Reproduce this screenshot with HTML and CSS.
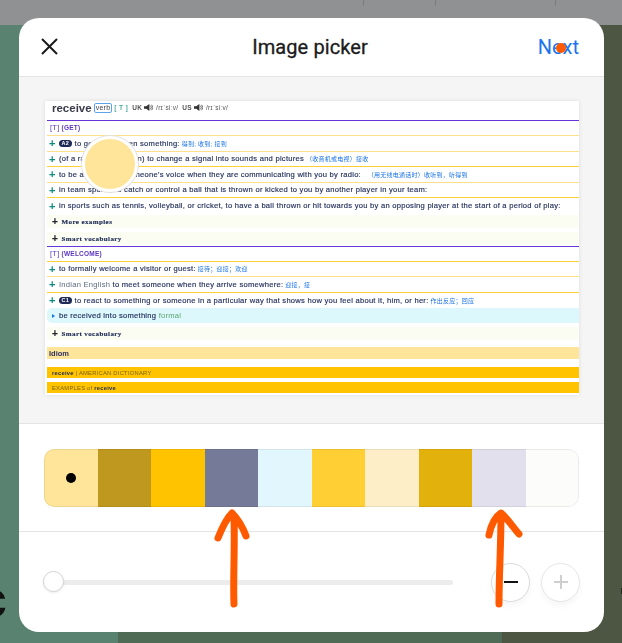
FILE: index.html
```html
<!DOCTYPE html>
<html lang="en">

<head>
  <meta charset="UTF-8" />
  <meta name="viewport" content="width=device-width, initial-scale=1.0" />
  <title>Image picker</title>
  <link rel="stylesheet" href="styles.css">
</head>

<body>
  <div class="backdrop">
    <div class="topbar">
      <span class="tick tick-a"></span>
      <span class="tick tick-b"></span>
      <span class="tick tick-c"></span>
    </div>
    <div class="scene">
      <div class="scene-left"><span class="scene-letter">c</span></div>
      <div class="scene-right"><span class="scene-mark"></span></div>
    </div>
    <div class="scene-foot">
      <div class="foot-a"></div>
      <div class="foot-b"></div>
      <div class="foot-c"></div>
    </div>
  </div>

  <div class="modal">
    <div class="modal-header">
      <svg class="close-icon" viewBox="0 0 17 17" width="17" height="17">
        <path d="M1 1 L16 16 M16 1 L1 16" />
      </svg>
      <div class="modal-title">Image picker</div>
      <div class="next-link">Next</div>
    </div>

    <div class="preview-area">
      <div class="shot">
        <div class="shot-inner">
          <div class="word-row">
            <span class="word">receive</span>
            <span class="pos">verb</span>
            <span class="gram">[ T ]</span>
            <span class="region">UK</span>
            <svg class="speaker" viewBox="0 0 10 10" width="9" height="9"><path d="M0 3.5h2.5L6 1v8L2.5 6.500H0z" /><path class="wave" d="M7.200 3a3 3 0 0 1 0 4M8.500 2a4.500 4.500 0 0 1 0 6" /></svg>
            <span class="ipa">/rɪˈsiːv/</span>
            <span class="region">US</span>
            <svg class="speaker" viewBox="0 0 10 10" width="9" height="9"><path d="M0 3.5h2.5L6 1v8L2.5 6.500H0z" /><path class="wave" d="M7.200 3a3 3 0 0 1 0 4M8.500 2a4.500 4.500 0 0 1 0 6" /></svg>
            <span class="ipa">/rɪˈsiːv/</span>
          </div>

          <div class="sense"><b>[T]</b> <span>(GET)</span></div>
          <div class="row line-pale"><i>+</i><em>A2</em>to get or be given something: <u>得到; 收到; 接到</u></div>
          <div class="row line-gold"><i>+</i>(of a radio or television) to change a signal into sounds and pictures <u>（收音机或电视）接收</u></div>
          <div class="row line-pale"><i>+</i>to be able to hear someone's voice when they are communicating with you by radio: &nbsp;<u>（用无线电通话时）收听到，听得到</u></div>
          <div class="row line-gold"><i>+</i>in team sports, to catch or control a ball that is thrown or kicked to you by another player in your team:</div>
          <div class="row"><i>+</i>in sports such as tennis, volleyball, or cricket, to have a ball thrown or hit towards you by an opposing player at the start of a period of play:</div>
          <div class="more more-first"><i>+</i>More examples</div>
          <div class="more"><i>+</i>Smart vocabulary</div>

          <div class="sense sense-second"><b>[T]</b> <span>(WELCOME)</span></div>
          <div class="row line-pale"><i>+</i>to formally welcome a visitor or guest: <u>接待；迎接；欢迎</u></div>
          <div class="row line-gold"><i>+</i><span class="note">Indian English</span>&nbsp;to meet someone when they arrive somewhere: <u>迎接，接</u></div>
          <div class="row"><i>+</i><em>C1</em>to react to something or someone in a particular way that shows how you feel about it, him, or her: <u>作出反应；回应</u></div>
          <div class="phrase"><span class="caret"></span>be received into something <span class="formal">formal</span></div>
          <div class="more more-last"><i>+</i>Smart vocabulary</div>
          <div class="idiom">Idiom</div>
          <div class="band"><strong>receive</strong>&nbsp;| AMERICAN DICTIONARY</div>
          <div class="band band-second">EXAMPLES of&nbsp;<strong>receive</strong></div>
        </div>
        <div class="loupe"></div>
      </div>
    </div>

    <div class="palette-area">
      <div class="palette">
        <div class="swatch c1"><span class="picked"></span></div>
        <div class="swatch c2"></div>
        <div class="swatch c3"></div>
        <div class="swatch c4"></div>
        <div class="swatch c5"></div>
        <div class="swatch c6"></div>
        <div class="swatch c7"></div>
        <div class="swatch c8"></div>
        <div class="swatch c9"></div>
        <div class="swatch c10"></div>
      </div>
    </div>

    <div class="zoom-area">
      <div class="slider"><span class="slider-thumb"></span></div>
      <div class="round-btn">
        <svg viewBox="0 0 16 16" width="16" height="16"><path class="minus" d="M1 8H15" /></svg>
      </div>
      <div class="round-btn round-btn-off">
        <svg viewBox="0 0 16 16" width="16" height="16"><path class="plus" d="M1 8H15M8 1V15" /></svg>
      </div>
    </div>
  </div>

  <!-- hand drawn marks on top of the screenshot -->
  <div class="next-dot"></div>
  <svg class="scribble" viewBox="0 0 622 643" width="622" height="643">
    <path d="M234 604 C233 580 235 545 234 518 M218 538 C222 528 227 518 232 513 C238 519 243 528 246 536" />
    <path d="M499 604 C499 575 501 545 501 514 M489 535 C491 525 495 517 501 513 C507 518 513 527 519 534" />
  </svg>
</body>

</html>
```

FILE: styles.css
```css
body {
  margin: 0;
  padding: 0;
  width: 622px;
  height: 643px;
  overflow: hidden;
  font-family: 'Roboto', sans-serif;
}

/* page behind the dialog */
.backdrop {
  display: flex;
  flex-direction: column;
  height: 643px;
}

.topbar {
  display: flex;
  height: 25px;
  background-color: #909193;
  position: relative;
}

.tick {
  position: absolute;
  top: 0;
  width: 1px;
  height: 6px;
  background-color: #7d7e80;
}

.tick-a { left: 363px; }
.tick-b { left: 435px; }
.tick-c { left: 555px; }

.scene {
  flex: 1;
  display: flex;
  min-height: 0;
}

.scene-left {
  width: 50%;
  background-color: #5a8270;
  overflow: hidden;
}

.scene-right {
  width: 50%;
  background-color: #4d5643;
}

.scene-letter {
  display: block;
  margin: 548px 0 0 -22px;
  font-family: 'Liberation Sans', sans-serif;
  font-weight: 700;
  font-size: 52px;
  line-height: 52px;
  color: #111;
}

.scene-mark {
  display: block;
  width: 1px;
  height: 6px;
  margin: 563px 0 0 auto;
  background-color: #23271f;
}

.scene-foot {
  display: flex;
  height: 11px;
}

.foot-a { width: 118px; background-color: #5a8270; }
.foot-b { width: 384px; background-color: #506b55; }
.foot-c { flex: 1; background-color: #4d5643; }

/* dialog */
.modal {
  position: absolute;
  left: 19px;
  top: 18px;
  width: 585px;
  height: 614px;
  display: flex;
  flex-direction: column;
  background-color: #fff;
  border-radius: 20px;
  overflow: hidden;
}

.modal-header {
  height: 59px;
  flex: none;
  box-sizing: border-box;
  display: grid;
  grid-template-columns: 1fr auto 1fr;
  align-items: center;
  padding: 0 25px 1px 22px;
  border-bottom: 1px solid #e4e4e4;
}

.close-icon path {
  fill: none;
  stroke: #1a1a1a;
  stroke-width: 2;
}

.modal-title {
  font-size: 20px;
  font-weight: 400;
  letter-spacing: 0.1px;
  color: #1c1c1c;
  -webkit-text-stroke: 0.3px #1c1c1c;
}

.next-link {
  justify-self: end;
  font-size: 20px;
  color: #1a73f0;
}

.preview-area {
  height: 347px;
  flex: none;
  padding: 24px 25px 0 26px;
  box-sizing: border-box;
  background-color: #f5f5f5;
  border-bottom: 1px solid #e4e4e4;
}

.shot {
  position: relative;
  width: 534px;
  height: 294px;
  background-color: #fff;
  box-shadow: 0 0 4px rgba(0, 0, 0, 0.1);
}

.shot-inner {
  height: 100%;
  padding-left: 2px;
  box-sizing: border-box;
  font-family: 'Liberation Sans', 'Noto Sans CJK SC', sans-serif;
  font-size: 7.6px;
  font-weight: 400;
  letter-spacing: 0.25px;
  color: #1d2a57;
  -webkit-text-stroke: 0.15px #1d2a57;
  filter: blur(0.25px);
}

.word-row {
  display: flex;
  align-items: center;
  gap: 2px;
  height: 19.500px;
  box-sizing: border-box;
  padding: 0 0 5px 5px;
  border-bottom: 1px solid #6a35d8;
  color: #444;
  font-size: 6.5px;
  -webkit-text-stroke: 0;
}

.word {
  font-size: 11.5px;
  font-weight: 700;
  letter-spacing: 0;
  color: #3a3a4a;
}

.pos {
  border: 1px solid #5aa5e8;
  border-radius: 2px;
  padding: 0 1px;
  font-size: 7px;
  line-height: 8px;
}

.gram {
  color: #14907f;
  font-size: 7.500px;
  margin-right: 2px;
}

.region {
  font-weight: 700;
  color: #555;
}

.ipa {
  margin: 0 2px 0 1px;
  color: #555;
}

.speaker path {
  fill: #333;
}

.speaker .wave {
  fill: none;
  stroke: #333;
  stroke-width: 0.8;
}

.sense {
  height: 15.500px;
  display: flex;
  align-items: center;
  gap: 2px;
  padding-left: 3px;
  box-sizing: border-box;
  color: #5a35c0;
  -webkit-text-stroke: 0;
  font-size: 6.5px;
  border-bottom: 1px solid #ffe08a;
}

.sense b {
  font-size: 7.500px;
  font-weight: 400;
}

.sense span {
  font-weight: 700;
}

.sense-second {
  margin-top: 1px;
  border-top: 1px solid #6a35d8;
  border-bottom-color: #ffcf33;
}

.row {
  height: 15.500px;
  display: flex;
  align-items: center;
  padding-left: 2px;
  box-sizing: border-box;
  white-space: nowrap;
}

.row i {
  width: 10px;
  flex: none;
  font-style: normal;
  font-weight: 700;
  font-size: 11px;
  color: #0f8a7e;
  -webkit-text-stroke: 0;
}

.row em {
  font-style: normal;
  font-weight: 700;
  font-size: 5.500px;
  line-height: 7px;
  color: #fff;
  -webkit-text-stroke: 0;
  background-color: #1d2a57;
  border-radius: 4px;
  padding: 0 2.5px;
  margin-right: 3px;
}

.row u {
  text-decoration: none;
  color: #1a73e8;
  -webkit-text-stroke: 0;
  margin-left: 2px;
  font-size: 6px;
}

.line-pale { border-bottom: 1px solid #ffe08a; }
.line-gold { border-bottom: 1px solid #ffcf33; }

.note {
  color: #5b6a80;
  -webkit-text-stroke: 0;
}

.more {
  height: 13px;
  margin: 4px 0 0;
  display: flex;
  align-items: center;
  padding-left: 5px;
  background-color: #fcfdf2;
  font-family: 'Liberation Serif', serif;
  font-weight: 700;
  font-size: 7px;
  letter-spacing: 0.4px;
}

.more i {
  width: 9.5px;
  flex: none;
  font-family: 'Liberation Sans', sans-serif;
  font-style: normal;
  font-size: 10px;
  color: #222;
}

.more-first {
  margin-top: 1.500px;
}

.more-last {
  margin-top: 4px;
}

.phrase {
  height: 15px;
  display: flex;
  align-items: center;
  padding-left: 5px;
  white-space: pre;
  background-color: #dcf8fd;
  border-radius: 5px 0 0 5px;
}

.caret {
  width: 0;
  height: 0;
  margin-right: 4px;
  border-left: 3px solid #1a73e8;
  border-top: 2.500px solid transparent;
  border-bottom: 2.500px solid transparent;
}

.formal {
  color: #5aa56a;
  -webkit-text-stroke: 0;
}

.idiom {
  height: 12px;
  margin-top: 7px;
  padding-left: 2px;
  display: flex;
  align-items: center;
  background-color: #fee59a;
  font-size: 7.500px;
  font-weight: 700;
  color: #2b3060;
  letter-spacing: 0;
  -webkit-text-stroke: 0;
}

.band {
  height: 11px;
  margin-top: 8px;
  padding-left: 5px;
  display: flex;
  align-items: center;
  background-color: #ffc300;
  font-size: 5.800px;
  letter-spacing: 0.25px;
  color: #7a6410;
  -webkit-text-stroke: 0;
}

.band strong {
  color: #1d2a57;
}

.band-second {
  margin-top: 4px;
}

/* colour picker circle */
.loupe {
  position: absolute;
  left: 37px;
  top: 35px;
  width: 50px;
  height: 50px;
  background-color: #fee59a;
  border: 3px solid #fff;
  border-radius: 50%;
  box-shadow: 0 0 0 1px #e2e2e2;
}

.palette-area {
  height: 108px;
  flex: none;
  padding-top: 25px;
  box-sizing: border-box;
  border-bottom: 1px solid #e4e4e4;
}

.palette {
  display: flex;
  width: 535px;
  height: 58px;
  margin-left: 25px;
  border-radius: 10px;
  overflow: hidden;
  position: relative;
}

.palette::after {
  content: "";
  position: absolute;
  inset: 0;
  border: 1px solid rgba(0, 0, 0, 0.07);
  border-radius: 10px;
}

.swatch {
  flex: 1;
  display: flex;
  align-items: center;
  justify-content: center;
}

.picked {
  width: 10px;
  height: 10px;
  background-color: #000;
  border-radius: 50%;
}

.c1 { background-color: #fee59a; }
.c2 { background-color: #bf981f; }
.c3 { background-color: #ffc300; }
.c4 { background-color: #767a99; }
.c5 { background-color: #e1f7fd; }
.c6 { background-color: #ffcf33; }
.c7 { background-color: #fdeec7; }
.c8 { background-color: #e2b10c; }
.c9 { background-color: #e1e0ec; }
.c10 { background-color: #fcfcfa; }

.zoom-area {
  flex: 1;
  display: flex;
  align-items: center;
  padding: 0 24px;
}

.slider {
  flex: none;
  width: 410px;
  height: 5px;
  margin-right: 38px;
  background-color: #ececec;
  border-radius: 3px;
  position: relative;
}

.slider-thumb {
  position: absolute;
  left: 0;
  top: -9px;
  width: 19px;
  height: 19px;
  background-color: #fff;
  border: 1px solid #d4d4d8;
  border-radius: 50%;
  box-shadow: 0 1px 3px rgba(0, 0, 0, 0.08);
}

.round-btn {
  width: 39px;
  height: 39px;
  flex: none;
  box-sizing: border-box;
  display: flex;
  align-items: center;
  justify-content: center;
  background-color: #fff;
  border: 1px solid #d9d9d9;
  border-radius: 50%;
  box-shadow: 0 4px 6px rgba(0, 0, 0, 0.04);
}

.round-btn-off {
  margin-left: 11px;
  border-color: #e6e6e6;
}

.minus {
  fill: none;
  stroke: #111;
  stroke-width: 2;
}

.plus {
  fill: none;
  stroke: #cfcfcf;
  stroke-width: 2;
}

/* orange annotations */
.next-dot {
  position: absolute;
  left: 556px;
  top: 43px;
  width: 10px;
  height: 10px;
  background-color: #ff5a00;
  border-radius: 50%;
}

.scribble {
  position: absolute;
  left: 0;
  top: 0;
}

.scribble path {
  fill: none;
  stroke: #ff5a00;
  stroke-width: 7;
  stroke-linecap: round;
  stroke-linejoin: round;
}
```
